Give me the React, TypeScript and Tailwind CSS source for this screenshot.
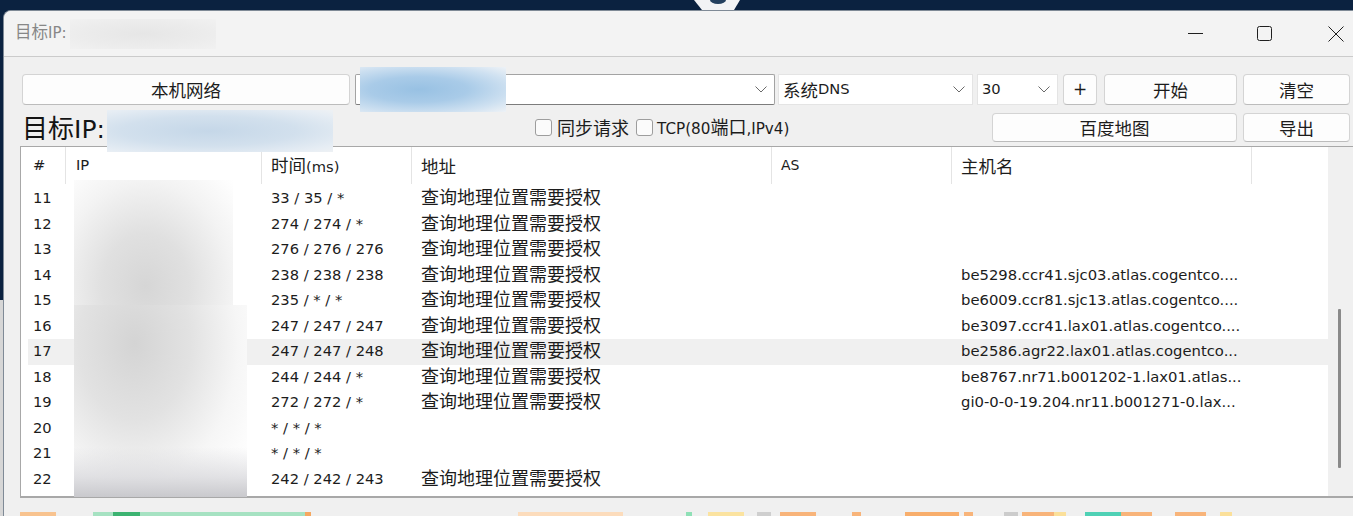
import React from "react";

type P = { children?: React.ReactNode; className?: string };

const cjk = "font-['Noto_Sans_CJK_SC',sans-serif]";

function Z({ children, className = "" }: P) {
  return <span className={cjk + " leading-none " + className}>{children}</span>;
}

function Chevron({ className = "" }: { className?: string }) {
  return (
    <svg className={className} width="12" height="7" viewBox="0 0 12 7" fill="none">
      <path d="M0.5 0.5 L6 6 L11.5 0.5" stroke="#6a6a6a" strokeWidth="1" />
    </svg>
  );
}

function Btn({ children, className = "" }: P) {
  return (
    <div
      className={
        "flex shrink-0 items-center justify-center rounded-[4px] border border-[#d4d4d4] border-b-[#bcbcbc] bg-[#fdfdfd] " +
        className
      }
    >
      {children}
    </div>
  );
}

function Check() {
  return <div className="h-[17px] w-[17px] shrink-0 rounded-[3px] border border-[#9d9d9d] bg-[#fbfbfb]" />;
}

const rows: [number, string, boolean, string][] = [
  [11, "33 / 35 / *", true, ""],
  [12, "274 / 274 / *", true, ""],
  [13, "276 / 276 / 276", true, ""],
  [14, "238 / 238 / 238", true, "be5298.ccr41.sjc03.atlas.cogentco...."],
  [15, "235 / * / *", true, "be6009.ccr81.sjc13.atlas.cogentco...."],
  [16, "247 / 247 / 247", true, "be3097.ccr41.lax01.atlas.cogentco...."],
  [17, "247 / 247 / 248", true, "be2586.agr22.lax01.atlas.cogentco..."],
  [18, "244 / 244 / *", true, "be8767.nr71.b001202-1.lax01.atlas..."],
  [19, "272 / 272 / *", true, "gi0-0-0-19.204.nr11.b001271-0.lax..."],
  [20, "* / * / *", false, ""],
  [21, "* / * / *", false, ""],
  [22, "242 / 242 / 243", true, ""],
];

const strip: [number, number, string][] = [
  [20, 56, "#f8c38f"],
  [93, 113, "#a6e2c2"],
  [113, 140, "#3cb371"],
  [140, 305, "#a6e2c2"],
  [305, 311, "#f6a860"],
  [518, 623, "#fcdcbc"],
  [686, 692, "#8fe0b6"],
  [708, 744, "#fbe3a0"],
  [757, 771, "#cfcfcf"],
  [780, 816, "#f8b47a"],
  [852, 861, "#f8b47a"],
  [905, 959, "#f8ae6c"],
  [964, 973, "#f8b47a"],
  [1004, 1018, "#cccccc"],
  [1022, 1054, "#f8b47a"],
  [1054, 1066, "#fbe09a"],
  [1085, 1121, "#4fd1b5"],
  [1121, 1152, "#f8b47a"],
  [1175, 1206, "#f8b47a"],
  [1220, 1232, "#fbe09a"],
];

export default function App() {
  let cursor = 4;
  const stripEls: React.ReactNode[] = [];
  strip.forEach(([s, e, c], i) => {
    stripEls.push(<div key={"g" + i} className="shrink-0" style={{ width: s - cursor }} />);
    stripEls.push(<div key={"s" + i} className="h-full shrink-0" style={{ width: e - s, background: c }} />);
    cursor = e;
  });

  return (
    <div className="flex h-[516px] w-[1353px] flex-col overflow-hidden bg-[#0b2240] font-['DejaVu_Sans',sans-serif] text-[#1c1c1c]">
      {/* desktop strip */}
      <div className="relative h-[10px] shrink-0">
        <svg className="absolute left-[694px] top-0" width="46" height="10" viewBox="0 0 46 10">
          <polygon points="0,0 46,0 40,10 8,10" fill="#f2f3f5" />
          <ellipse cx="24" cy="0" rx="8" ry="4" fill="#23405f" />
        </svg>
      </div>
      <div className="flex flex-1">
        <div className="flex w-[3px] shrink-0 flex-col">
          <div className="h-[290px] bg-[#0b2240]" />
          <div className="flex-1 bg-[#d6d6d6]" />
        </div>
        {/* window */}
        <div className="flex flex-1 flex-col overflow-hidden rounded-tl-[8px] border-l border-t border-[#7f8a96] bg-[#f0f0f0]">
          {/* title bar */}
          <div className="flex h-[46px] shrink-0 items-center border-b border-[#cbcbcb] bg-[#f3f3f3] pl-[11px]">
            <div className="flex items-baseline text-[#878787]">
              <Z className="text-[16.5px]">目标</Z>
              <span className="text-[15px]">IP:</span>
            </div>
            <div className="ml-[3px] h-[30px] w-[146px] bg-[radial-gradient(ellipse_at_center,#e6e6e6_0%,#ececec_60%,#f1f1f1_100%)]" />
            <div className="ml-auto mr-[9px] flex items-center">
              <svg width="16" height="16" viewBox="0 0 16 16" fill="none">
                <path d="M0 7.5H15" stroke="#1f1f1f" strokeWidth="1" />
              </svg>
              <svg className="ml-[53px]" width="16" height="16" viewBox="0 0 16 16" fill="none">
                <rect x="0.5" y="0.5" width="14" height="14" rx="2" stroke="#1f1f1f" strokeWidth="1" />
              </svg>
              <svg className="ml-[55px]" width="16" height="16" viewBox="0 0 16 16" fill="none">
                <path d="M0.5 0.5L15.5 15.5M15.5 0.5L0.5 15.5" stroke="#1f1f1f" strokeWidth="1" />
              </svg>
            </div>
          </div>

          {/* client */}
          <div className="flex flex-1 flex-col pl-[18px] pr-[3px] pt-[17px]">
            {/* row 1 */}
            <div className="flex h-[31px] shrink-0">
              <Btn className="w-[328px]">
                <Z className="text-[17.5px]">本机网络</Z>
              </Btn>
              <div className="relative ml-[5px] flex w-[420px] shrink-0 items-center justify-end rounded-[2px] border border-[#a3a3a3] border-b-[#7c7c7c] bg-white pr-[7px]">
                <Chevron />
                <div className="absolute left-[4px] top-[-8px] h-[45px] w-[146px] bg-[radial-gradient(ellipse_at_40%_50%,#98c1e3_0%,#a9cbe8_40%,#cfe1f1_75%,#eef2f6_100%)]" />
              </div>
              <div className="ml-[3px] flex w-[195px] shrink-0 items-center border border-[#e4e4e4] bg-white pl-[4px] pr-[7px]">
                <Z className="text-[17.5px]">系统</Z>
                <span className="text-[14.7px] leading-none">DNS</span>
                <Chevron className="ml-auto" />
              </div>
              <div className="ml-[4px] flex w-[81px] shrink-0 items-center border border-[#e4e4e4] bg-white pl-[4px] pr-[7px]">
                <span className="text-[14.7px] leading-none">30</span>
                <Chevron className="ml-auto" />
              </div>
              <Btn className="ml-[5px] w-[34px]">
                <span className="text-[17px] leading-none">+</span>
              </Btn>
              <Btn className="ml-[7px] w-[133px]">
                <Z className="text-[17.5px]">开始</Z>
              </Btn>
              <Btn className="ml-[6px] w-[107px]">
                <Z className="text-[17.5px]">清空</Z>
              </Btn>
            </div>

            {/* row 2 */}
            <div className="mt-[8px] flex h-[29px] shrink-0 items-center">
              <div className="flex w-[85px] shrink-0 items-baseline text-[#141414]">
                <Z className="text-[26px]">目标</Z>
                <span className="text-[25px] leading-none">IP:</span>
              </div>
              <div className="relative w-[226px] shrink-0 self-stretch">
                <div className="absolute left-0 top-[-3px] z-10 h-[42px] w-[226px] bg-[radial-gradient(ellipse_at_45%_50%,#c5d7e8_0%,#d2e0ed_50%,#e6edf4_85%,#eef1f4_100%)]" />
              </div>
              <div className="ml-[202px] flex items-center">
                <Check />
                <Z className="ml-[5px] text-[18px]">同步请求</Z>
                <div className="ml-[7px]">
                  <Check />
                </div>
                <span className="ml-[4px] flex items-baseline text-[15.2px] leading-none">
                  TCP(80<Z className="text-[18px]">端口</Z>,IPv4)
                </span>
              </div>
              <Btn className="ml-auto w-[245px] self-stretch">
                <Z className="text-[17.5px]">百度地图</Z>
              </Btn>
              <Btn className="ml-[6px] w-[107px] self-stretch">
                <Z className="text-[17.5px]">导出</Z>
              </Btn>
            </div>

            {/* table */}
            <div className="relative -ml-[2px] -mr-[3px] mt-[4px] flex h-[352px] shrink-0 border-b-2 border-l border-t border-[#a8a8a8] bg-white text-[14.7px]">
              <div className="flex flex-1 flex-col">
                <div className="flex h-[37px] shrink-0">
                  <div className="flex w-[45px] shrink-0 items-center border-r border-[#e4e4e4] pl-[12px]">#</div>
                  <div className="flex w-[196px] shrink-0 items-center border-r border-[#e4e4e4] pl-[10px]">IP</div>
                  <div className="flex w-[150px] shrink-0 items-center border-r border-[#e4e4e4] pl-[9px]">
                    <span className="flex items-baseline leading-none">
                      <Z className="text-[17.5px]">时间</Z>
                      <span>(ms)</span>
                    </span>
                  </div>
                  <div className="flex w-[360px] shrink-0 items-center border-r border-[#e4e4e4] pl-[9px]">
                    <Z className="text-[17.5px]">地址</Z>
                  </div>
                  <div className="flex w-[180px] shrink-0 items-center border-r border-[#e4e4e4] pl-[9px] text-[14px]">AS</div>
                  <div className="flex w-[300px] shrink-0 items-center border-r border-[#e4e4e4] pl-[9px]">
                    <Z className="text-[17.5px]">主机名</Z>
                  </div>
                </div>
                <div className="flex flex-col pt-[2px]">
                  {rows.map(([n, t, a, h]) => (
                    <div
                      key={n}
                      className={"ml-[7px] flex h-[25.5px] shrink-0 items-center " + (n === 17 ? "bg-[#f0f0f0]" : "")}
                    >
                      <div className="w-[38px] shrink-0 pl-[5px] leading-none">{n}</div>
                      <div className="w-[196px] shrink-0" />
                      <div className="w-[150px] shrink-0 whitespace-nowrap pl-[9px] leading-none">{t}</div>
                      <div className="w-[360px] shrink-0 pl-[9px]">
                        {a && <Z className="text-[18px]">查询地理位置需要授权</Z>}
                      </div>
                      <div className="w-[180px] shrink-0" />
                      <div className="w-[300px] shrink-0 whitespace-nowrap pl-[9px] text-[14.8px] leading-none">{h}</div>
                    </div>
                  ))}
                </div>
              </div>
              <div className="flex w-[25px] shrink-0 flex-col bg-[#f0f0f0] pt-[162px]">
                <div className="ml-[10px] h-[159px] w-[3px] rounded-[1px] bg-[#8a8a8a]" />
              </div>
              {/* redacted IP column */}
              <div className="absolute left-[53px] top-[33px] h-[125px] w-[159px] bg-[radial-gradient(ellipse_at_45%_85%,#d6d6d6_0%,#e0e0e0_35%,#f3f3f3_70%,#ffffff_100%)]" />
              <div className="absolute left-[53px] top-[158px] h-[192px] w-[173px] bg-[radial-gradient(ellipse_at_35%_20%,#d4d4d4_0%,#e2e2e2_35%,#f6f6f6_65%,#ffffff_90%)]" />
              <div className="absolute left-[53px] top-[300px] h-[50px] w-[173px] bg-[linear-gradient(180deg,rgba(255,255,255,0)_0%,rgba(214,214,218,0.7)_60%,#c9c9cd_100%)]" />
            </div>

            <div className="-ml-[18px] mt-[14px] flex h-[4px] shrink-0">{stripEls}</div>
          </div>
        </div>
      </div>
    </div>
  );
}
